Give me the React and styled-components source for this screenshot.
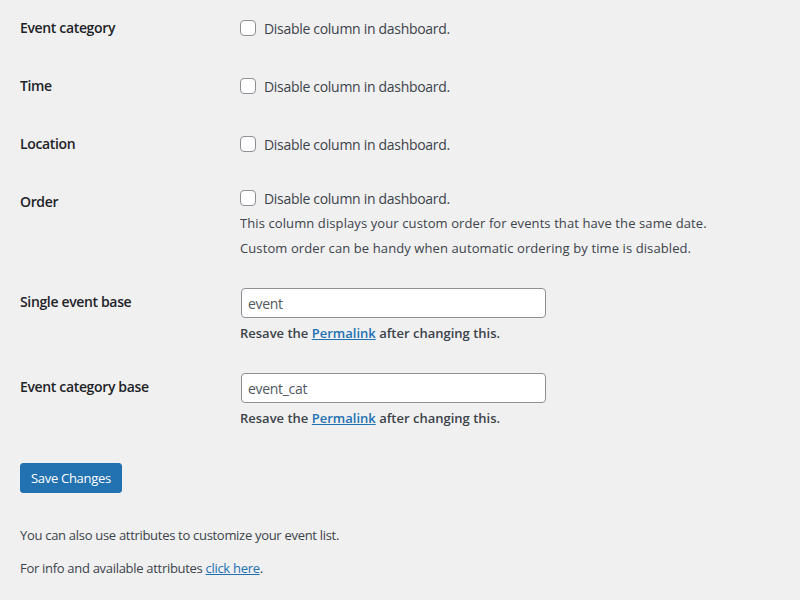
import styled, { createGlobalStyle } from "styled-components";

const GlobalStyle = createGlobalStyle`
  html, body {
    margin: 0;
    padding: 0;
    background: #f0f0f1;
  }
  body {
    font-family: "Open Sans", "Noto Sans", sans-serif;
    font-size: 13px;
    color: #3c434a;
  }
`;

const Page = styled.div`
  width: 800px;
  height: 600px;
  overflow: hidden;
  padding: 0 20px;
  box-sizing: border-box;
  margin-top: -1px;
`;

const Row = styled.div`
  display: grid;
  grid-template-columns: 220px 1fr;
`;

const Label = styled.div`
  padding: 20px 0;
  font-size: 14px;
  font-weight: 600;
  line-height: 18px;
  color: #1d2327;
  letter-spacing: -0.35px;
`;

const Field = styled.div`
  padding: ${(p) => (p.$spaced ? "18px" : "15px")} 0 15px;
`;

const CheckLabel = styled.label`
  display: flex;
  align-items: center;
  gap: 8px;
  height: ${(p) => (p.$compact ? "20px" : "22px")};
  font-size: 14px;
  color: #3c434a;
  letter-spacing: -0.3px;
`;

const Checkbox = styled.span`
  width: 16px;
  height: 16px;
  box-sizing: border-box;
  border: 1px solid #8c8f94;
  border-radius: 4px;
  background: #fff;
  flex-shrink: 0;
`;

const Desc = styled.p`
  margin: 5px 0 0;
  font-size: 13px;
  line-height: 20px;
  color: #3c434a;
  letter-spacing: 0.1px;
`;

const TextInput = styled.input`
  display: block;
  width: 305px;
  height: 30px;
  box-sizing: border-box;
  margin-left: 1px;
  padding: 0 6px;
  border: 1px solid #8c8f94;
  border-radius: 4px;
  background: #fff;
  font-family: inherit;
  font-size: 14px;
  color: #50575e;
  letter-spacing: -0.3px;
  outline: none;
`;

const Note = styled.p`
  margin: 5px 0 0;
  font-size: 13px;
  font-weight: 600;
  line-height: 20px;
  color: #3c434a;
`;

const Link = styled.a`
  color: #2271b1;
  text-decoration: underline;
`;

const Submit = styled.div`
  margin-top: 20px;
`;

const Button = styled.button`
  height: 30px;
  padding: 0 10px;
  border: 1px solid #2271b1;
  border-radius: 3px;
  background: #2271b1;
  color: #fff;
  font-family: inherit;
  font-size: 13px;
  letter-spacing: -0.3px;
`;

const Info = styled.p`
  margin: ${(p) => p.$top}px 0 0;
  font-size: 13px;
  line-height: 19.5px;
  color: #3c434a;
  letter-spacing: -0.3px;
`;

const columns = ["Event category", "Time", "Location"];

export default function App() {
  return (
    <Page>
      <GlobalStyle />
      {columns.map((name) => (
        <Row key={name}>
          <Label>{name}</Label>
          <Field $spaced>
            <CheckLabel>
              <Checkbox />
              Disable column in dashboard.
            </CheckLabel>
          </Field>
        </Row>
      ))}
      <Row>
        <Label>Order</Label>
        <Field>
          <CheckLabel $compact>
            <Checkbox />
            Disable column in dashboard.
          </CheckLabel>
          <Desc>This column displays your custom order for events that have the same date.</Desc>
          <Desc>Custom order can be handy when automatic ordering by time is disabled.</Desc>
        </Field>
      </Row>
      <Row>
        <Label>Single event base</Label>
        <Field>
          <TextInput defaultValue="event" />
          <Note>
            Resave the <Link href="#">Permalink</Link> after changing this.
          </Note>
        </Field>
      </Row>
      <Row>
        <Label>Event category base</Label>
        <Field>
          <TextInput defaultValue="event_cat" />
          <Note>
            Resave the <Link href="#">Permalink</Link> after changing this.
          </Note>
        </Field>
      </Row>
      <Submit>
        <Button>Save Changes</Button>
      </Submit>
      <Info $top={33}>You can also use attributes to customize your event list.</Info>
      <Info $top={13}>
        For info and available attributes <Link href="#">click here</Link>.
      </Info>
    </Page>
  );
}
